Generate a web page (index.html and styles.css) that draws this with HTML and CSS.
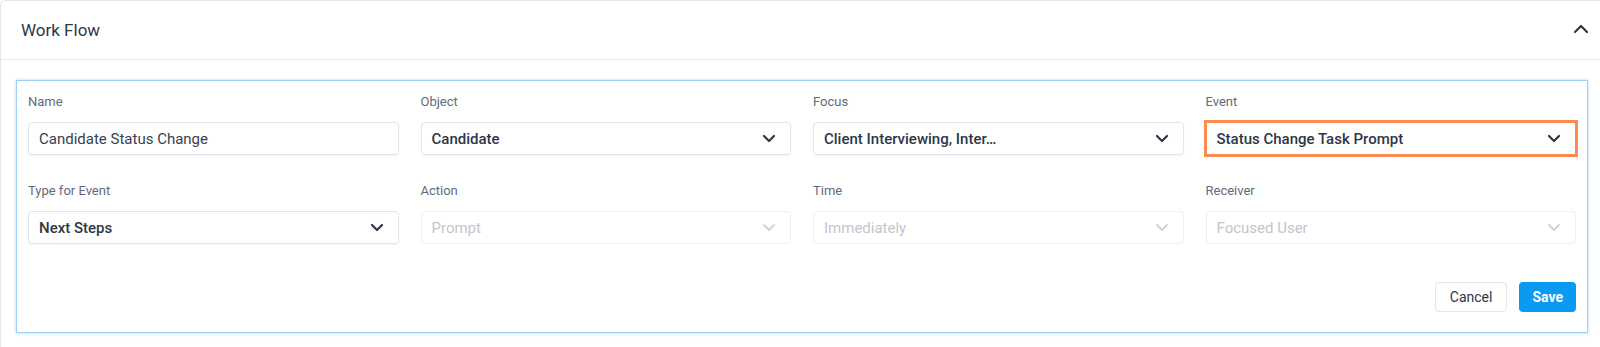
FILE: index.html
```html
<!doctype html>
<html lang="en">
    <head>
        <meta charset="UTF-8" />
        <meta name="viewport" content="width=device-width, initial-scale=1.0" />
        <title>Work Flow</title>
        <link rel="stylesheet" href="styles.css">
    </head>
    <body>
        <div class="card">
            <div class="card-header">
                <h2>Work Flow</h2>
                <svg class="collapse-icon" width="16" height="10" viewBox="0 0 16 10">
                    <path d="M2 8 L8 2 L14 8" fill="none" stroke="#2d3748" stroke-width="2.2" stroke-linecap="round" stroke-linejoin="round" />
                </svg>
            </div>

            <div class="panel">
                <div class="fields">
                    <div class="field">
                        <label>Name</label>
                        <div class="control text-input">Candidate Status Change</div>
                    </div>
                    <div class="field">
                        <label>Object</label>
                        <div class="control select">
                            <span>Candidate</span>
                            <svg class="chev" width="14" height="9" viewBox="0 0 14 9"><path d="M2 2 L7 7 L12 2" /></svg>
                        </div>
                    </div>
                    <div class="field">
                        <label>Focus</label>
                        <div class="control select">
                            <span>Client Interviewing, Inter…</span>
                            <svg class="chev" width="14" height="9" viewBox="0 0 14 9"><path d="M2 2 L7 7 L12 2" /></svg>
                        </div>
                    </div>
                    <div class="field">
                        <label>Event</label>
                        <div class="control select highlighted">
                            <span>Status Change Task Prompt</span>
                            <svg class="chev" width="14" height="9" viewBox="0 0 14 9"><path d="M2 2 L7 7 L12 2" /></svg>
                        </div>
                    </div>

                    <div class="field">
                        <label>Type for Event</label>
                        <div class="control select">
                            <span>Next Steps</span>
                            <svg class="chev" width="14" height="9" viewBox="0 0 14 9"><path d="M2 2 L7 7 L12 2" /></svg>
                        </div>
                    </div>
                    <div class="field">
                        <label>Action</label>
                        <div class="control select disabled">
                            <span>Prompt</span>
                            <svg class="chev" width="14" height="9" viewBox="0 0 14 9"><path d="M2 2 L7 7 L12 2" /></svg>
                        </div>
                    </div>
                    <div class="field">
                        <label>Time</label>
                        <div class="control select disabled">
                            <span>Immediately</span>
                            <svg class="chev" width="14" height="9" viewBox="0 0 14 9"><path d="M2 2 L7 7 L12 2" /></svg>
                        </div>
                    </div>
                    <div class="field">
                        <label>Receiver</label>
                        <div class="control select disabled">
                            <span>Focused User</span>
                            <svg class="chev" width="14" height="9" viewBox="0 0 14 9"><path d="M2 2 L7 7 L12 2" /></svg>
                        </div>
                    </div>
                </div>

                <div class="actions">
                    <button class="btn-cancel">Cancel</button>
                    <button class="btn-save">Save</button>
                </div>
            </div>
        </div>
    </body>
</html>
```

FILE: styles.css
```css
body {
    font-family: Roboto, "Liberation Sans", sans-serif;
    margin: 0;
    background: white;
    overflow: hidden;
}

.card {
    width: calc(100% + 10px);
    height: 347px;
    border: 1px solid #e3e6ea;
    border-bottom: none;
    border-radius: 6px 6px 0 0;
    box-sizing: border-box;
    background: white;
}

.card-header {
    display: flex;
    align-items: center;
    justify-content: space-between;
    height: 58px;
    padding: 0 20px 0 20px;
    border-bottom: 1px solid #e8eaed;
}

.card-header h2 {
    margin: 0;
    font-size: 17px;
    font-weight: 400;
    color: #2d3748;
}

.collapse-icon {
    margin-top: -2px;
}

.panel {
    margin: 20px 21px 0 15px;
    padding: 13px 11px 20px 11px;
    border: 1px solid #9dd2f6;
    box-shadow: 0 0 3px rgba(66, 165, 245, 0.45);
    background: white;
}

.fields {
    display: grid;
    grid-template-columns: repeat(4, 1fr);
    column-gap: 22px;
    row-gap: 28px;
}

.field label {
    display: block;
    font-size: 13px;
    line-height: 16px;
    color: #5f6b7a;
    margin-bottom: 12px;
}

.control {
    height: 33px;
    box-sizing: border-box;
    border: 1px solid #e2e5e9;
    border-radius: 4px;
    box-shadow: 0 1px 2px rgba(0, 0, 0, 0.05);
    display: flex;
    align-items: center;
    padding: 0 10px;
    font-size: 15px;
    color: #2d3748;
}

.text-input {
    color: #374151;
}

.select {
    justify-content: space-between;
    font-weight: 500;
    padding-right: 14px;
}

.chev path {
    fill: none;
    stroke: #2d3748;
    stroke-width: 2.2;
    stroke-linecap: round;
    stroke-linejoin: round;
}

.select.disabled {
    font-weight: 400;
    color: #c2c6cc;
    border-color: #eef0f3;
    box-shadow: none;
}

.select.disabled .chev path {
    stroke: #cfd3d8;
    stroke-width: 1.8;
}

.select.highlighted {
    outline: 3px solid #fd8a52;
    outline-offset: -1px;
    border-radius: 0;
}

.actions {
    display: flex;
    justify-content: flex-end;
    gap: 12px;
    margin-top: 38px;
}

button {
    font-family: Roboto, "Liberation Sans", sans-serif;
    font-size: 14px;
    height: 30px;
    border-radius: 4px;
    cursor: pointer;
}

.btn-cancel {
    background: white;
    color: #2d3748;
    border: 1px solid #e2e5e9;
    padding: 0 14px;
}

.btn-save {
    background: #0b9af1;
    color: white;
    border: none;
    font-weight: 700;
    padding: 0 13px;
}
```
